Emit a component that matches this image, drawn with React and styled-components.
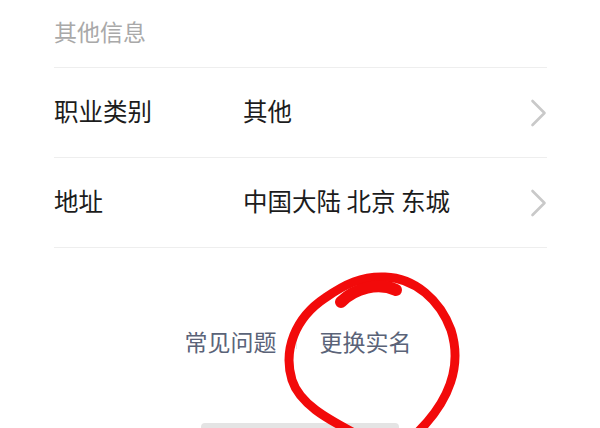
import React from "react";
import styled, { createGlobalStyle } from "styled-components";

const Global = createGlobalStyle`
  html, body { margin: 0; padding: 0; background: #fff; }
  body { font-family: "Noto Sans CJK SC", "Noto Sans", sans-serif; overflow: hidden; }
`;

const Page = styled.div`
  position: relative;
  width: 600px;
  height: 428px;
  overflow: hidden;
  background: #fff;
`;

const Section = styled.div`
  padding: 0 53px 0 54px;
`;

const SectionTitle = styled.div`
  height: 61px;
  padding-bottom: 6px;
  display: flex;
  align-items: center;
  font-size: 23px;
  color: #a9a9a9;
  border-bottom: 1px solid #eeeeee;
`;

const Row = styled.div`
  height: 84px;
  padding-bottom: 5px;
  display: flex;
  align-items: center;
  border-bottom: 1px solid #eeeeee;
`;

const Label = styled.div`
  width: 189px;
  font-size: 24.5px;
  color: #1c1c1c;
`;

const Value = styled.div`
  flex: 1;
  font-size: 24.5px;
  color: #1c1c1c;
  white-space: pre;
`;

const Chevron = styled.svg`
  width: 17px;
  height: 28px;
  flex: none;
  margin-top: 5px;
`;

const Links = styled.div`
  margin-top: 78px;
  display: flex;
  justify-content: center;
  align-items: center;
`;

const LinkText = styled.span`
  font-size: 23px;
  line-height: 30px;
  color: #5a6378;
  padding: 0 ${(p) => p.$pad}px;
`;

const Sep = styled.span`
  width: 1px;
  height: 16px;
  background: #e4e6ea;
`;

const HomeBar = styled.div`
  margin: 67px auto 0;
  width: 198px;
  height: 8px;
  border-radius: 4px;
  background: #e4e4e4;
`;

const Annotation = styled.svg`
  position: absolute;
  left: 0;
  top: 0;
  width: 600px;
  height: 428px;
  pointer-events: none;
`;

const Arrow = () => (
  <Chevron viewBox="0 0 17 28">
    <polyline
      points="2.5,2 14.5,14 2.5,26"
      fill="none"
      stroke="#c9c9c9"
      strokeWidth="2.6"
      strokeLinecap="round"
      strokeLinejoin="round"
    />
  </Chevron>
);

const rows = [
  { label: "职业类别", value: "其他" },
  { label: "地址", value: "中国大陆 北京 东城" },
];

export default function App() {
  return (
    <Page>
      <Global />
      <Section>
        <SectionTitle>其他信息</SectionTitle>
        {rows.map((r) => (
          <Row key={r.label}>
            <Label>{r.label}</Label>
            <Value>{r.value}</Value>
            <Arrow />
          </Row>
        ))}
      </Section>
      <Links>
        <LinkText $pad={19}>常见问题</LinkText>
        <Sep />
        <LinkText $pad={23}>更换实名</LinkText>
      </Links>
      <HomeBar />
      <Annotation viewBox="0 0 600 428">
        <path
          d="M 356 434 C 330 420, 300 405, 292 380 C 283 350, 295 318, 325 298 C 345 284, 362 276, 385 277 C 415 278, 440 300, 451 330 C 462 365, 450 400, 418 432"
          fill="none"
          stroke="#f20a0a"
          strokeWidth="9"
          strokeLinecap="round"
        />
        <path
          d="M 341 302 C 355 288, 378 282, 396 290"
          fill="none"
          stroke="#f20a0a"
          strokeWidth="12"
          strokeLinecap="round"
        />
      </Annotation>
    </Page>
  );
}
